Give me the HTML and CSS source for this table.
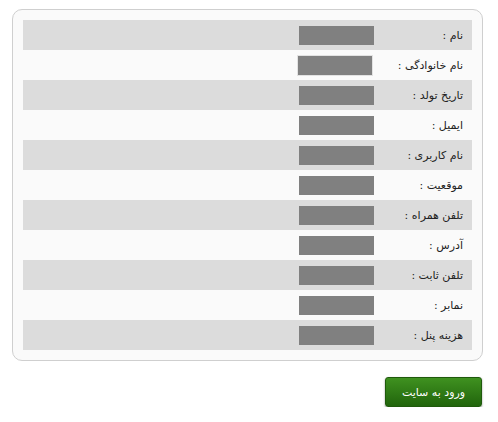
FILE: index.html
```html
<!DOCTYPE html>
<html lang="fa">
<head>
<meta charset="utf-8">
<link rel="stylesheet" href="styles.css">
</head>
<body>
<div class="panel">
  <div class="row alt"><span class="label">نام :</span><span class="field"></span></div>
  <div class="row"><span class="label">نام خانوادگی :</span><span class="field bordered"></span></div>
  <div class="row alt"><span class="label">تاریخ تولد :</span><span class="field"></span></div>
  <div class="row"><span class="label">ایمیل :</span><span class="field"></span></div>
  <div class="row alt"><span class="label">نام کاربری :</span><span class="field"></span></div>
  <div class="row"><span class="label">موقعیت :</span><span class="field"></span></div>
  <div class="row alt"><span class="label">تلفن همراه :</span><span class="field"></span></div>
  <div class="row"><span class="label">آدرس :</span><span class="field"></span></div>
  <div class="row alt"><span class="label">تلفن ثابت :</span><span class="field"></span></div>
  <div class="row"><span class="label">نمابر :</span><span class="field"></span></div>
  <div class="row alt"><span class="label">هزینه پنل :</span><span class="field"></span></div>
</div>
<div class="actions"><button class="btn">ورود به سایت</button></div>
</body>
</html>
```
FILE: styles.css
```css
html, body {
  margin: 0;
  padding: 0;
  background: #ffffff;
  font-family: Tahoma, "DejaVu Sans", sans-serif;
  font-size: 11px;
  color: #222;
}
.panel {
  margin: 9px 0 0 12px;
  width: 449px;
  padding: 10px;
  border: 1px solid #cfcfcf;
  border-radius: 10px;
  background: #fafafa;
  direction: rtl;
}
.row {
  display: flex;
  align-items: center;
  height: 30px;
  background: #fafafa;
}
.row.alt {
  background: #dcdcdc;
}
.label {
  width: 89px;
  padding-right: 9px;
  text-align: right;
  white-space: nowrap;
}
.field {
  display: block;
  width: 75px;
  height: 19px;
  background: #808080;
}
.field.bordered {
  width: 74px;
  height: 19px;
  border: 1px solid #e2e2e2;
  margin-right: 1px;
}
.actions {
  display: flex;
  justify-content: flex-end;
  width: 482px;
  margin-top: 16px;
}
.btn {
  width: 97px;
  height: 30px;
  border: 1px solid #1f5a0c;
  border-radius: 3px;
  background: linear-gradient(#3f9120, #21650c);
  box-shadow: 0 1px 2px rgba(0,0,0,0.45);
  color: #ffffff;
  font-family: Tahoma, "DejaVu Sans", sans-serif;
  font-size: 11px;
  direction: rtl;
  padding: 0;
}
```
